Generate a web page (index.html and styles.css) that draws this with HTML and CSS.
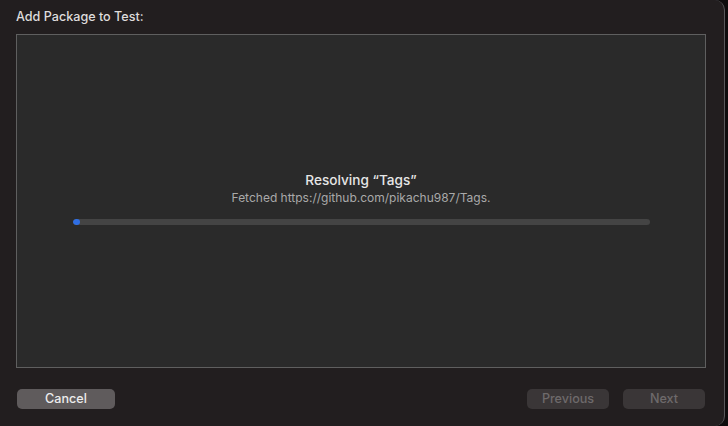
FILE: index.html
```html
<!DOCTYPE html>
<html>
<head>
<meta charset="utf-8">
<link rel="stylesheet" href="styles.css">
</head>
<body>
<div class="window">
  <div class="title">Add Package to Test:</div>
  <div class="panel">
    <div class="status">
      <div class="heading">Resolving “Tags”</div>
      <div class="sub">Fetched https://github.com/pikachu987/Tags.</div>
      <div class="track"><div class="fill"></div></div>
    </div>
  </div>
  <div class="footer">
    <button class="btn btn-primary">Cancel</button>
    <div class="nav">
      <button class="btn btn-disabled">Previous</button>
      <button class="btn btn-disabled">Next</button>
    </div>
  </div>
</div>
</body>
</html>
```
FILE: styles.css
```css
html, body {
  margin: 0;
  padding: 0;
  background: #0e0c0d;
  width: 728px;
  height: 426px;
  overflow: hidden;
  font-family: Inter, "Noto Sans", sans-serif;
}
.window {
  box-sizing: border-box;
  width: 725px;
  height: 426px;
  background: #221e1f;
  border-right: 1px solid #58575a;
  border-radius: 0 10px 10px 0;
  padding: 9px 19px 0 16px;
  display: flex;
  flex-direction: column;
}
.title {
  color: #dedcdc;
  font-size: 12.6px;
  font-weight: 500;
  line-height: 16px;
  height: 25px;
}
.panel {
  box-sizing: border-box;
  width: 690px;
  height: 334px;
  background: #2a2a2a;
  border: 1px solid #5f5f5f;
  display: flex;
  flex-direction: column;
  align-items: center;
  padding-top: 136px;
}
.status {
  display: flex;
  flex-direction: column;
  align-items: center;
}
.heading {
  color: #e6e6e6;
  font-size: 13.6px;
  font-weight: 500;
  line-height: 18px;
}
.sub {
  color: #a9a9a9;
  font-size: 12px;
  line-height: 16px;
  margin-top: 1px;
}
.track {
  width: 577px;
  height: 6px;
  border-radius: 3px;
  background: #444444;
  margin-top: 13px;
  overflow: hidden;
}
.fill {
  width: 7px;
  height: 6px;
  border-radius: 3px;
  background: #2f6ee3;
}
.footer {
  display: flex;
  justify-content: space-between;
  margin-top: 21px;
  padding-left: 1px;
}
.nav {
  display: flex;
  gap: 14px;
  margin-right: 0;
}
.btn {
  box-sizing: border-box;
  height: 20px;
  border: none;
  border-radius: 5px;
  font-family: Inter, "Noto Sans", sans-serif;
  font-size: 12.6px;
  font-weight: 500;
  line-height: 20px;
  padding: 0;
}
.btn-primary {
  width: 98px;
  background: #5f5b5c;
  color: #ececec;
}
.btn-disabled {
  width: 82px;
  background: #3a3637;
  color: #6e6a6b;
}
```
